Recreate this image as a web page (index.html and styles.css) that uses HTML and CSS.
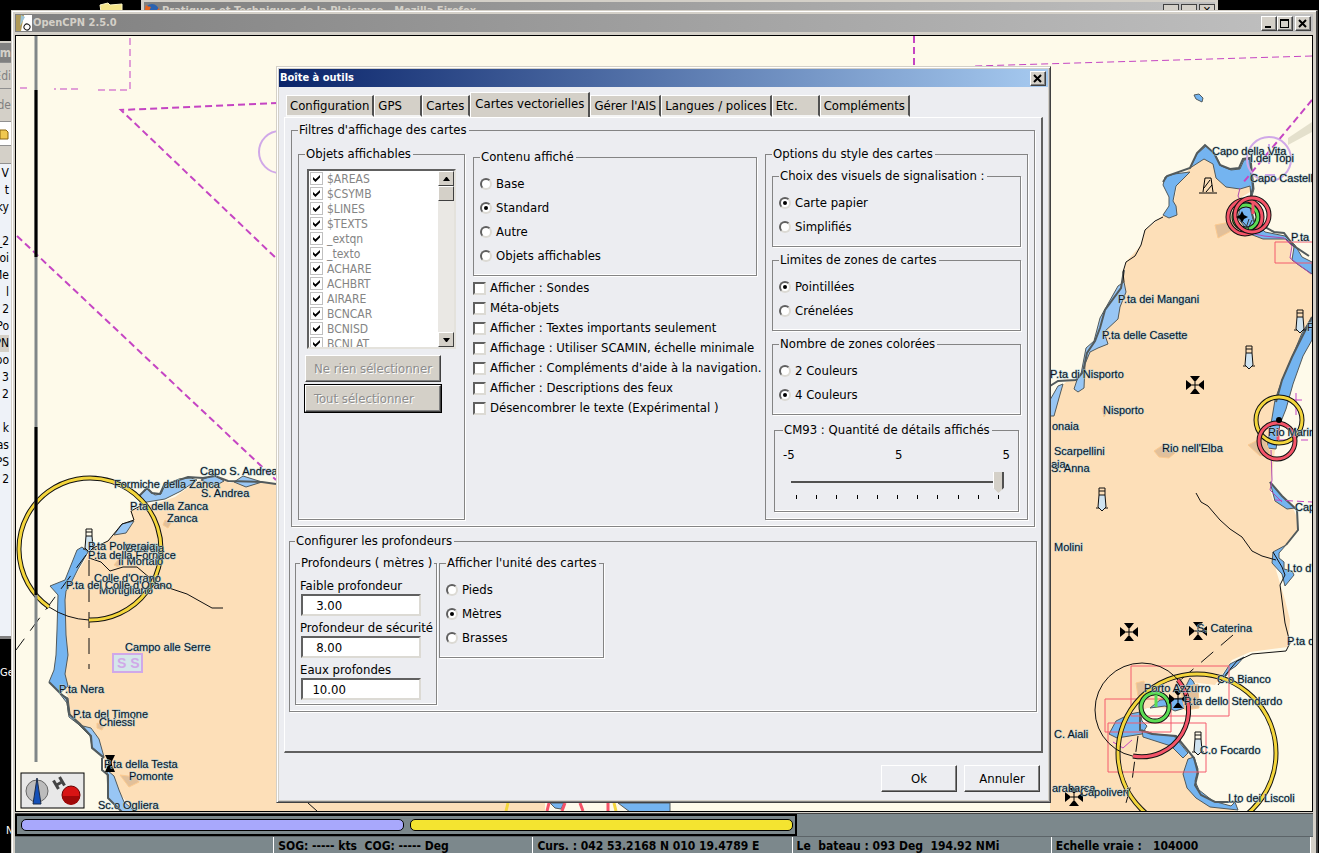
FILE: index.html
```html
<!DOCTYPE html>
<html lang="fr">
<head>
    <meta charset="UTF-8">
    <meta name="viewport" content="width=device-width, initial-scale=1.0">
    <title>OpenCPN 2.5.0</title>
    <link rel="stylesheet" href="styles.css">
</head>
<body>

<!-- Windows behind OpenCPN -->
<svg class="desktop-folder" width="24" height="12" viewBox="0 0 24 12"><path d="M1 5l8-2 2 2 12-1v8H2z" fill="#f5e58a" stroke="#fff8c8"/></svg>

<div class="firefox">
    <div class="firefox-title">
        <svg width="16" height="16" viewBox="0 0 16 16"><circle cx="8" cy="8" r="7" fill="#2a62b0"/><path d="M2 2c2 2 3 1 5 2l-2 4 4 3 6-6c2 6-2 10-7 10S-1 10 2 2z" fill="#e8641c"/></svg>
        <span>Pratiques et Techniques de la Plaisance - Mozilla Firefox</span>
        <i class="mini"></i><i class="mini"></i><i class="mini">✕</i>
    </div>
</div>

<div class="explorer">
    <div class="explorer-title">um</div>
    <div class="explorer-menu">Edi</div>
    <div class="explorer-tools">ide</div>
    <div class="explorer-address"><svg width="10" height="12" viewBox="0 0 10 12"><path d="M0 2h6l2 2v7H0z" fill="#f0c850" stroke="#8a6410"/></svg></div>
    <div class="explorer-head"></div>
    <ul class="explorer-list">
        <li>V</li><li>t</li><li>ky</li><li></li><li>_2</li><li>oi</li><li>Me</li><li>l</li><li>2</li><li>aPo</li><li class="current">PN</li><li>po</li><li>ar 3</li><li>ar 2</li><li></li><li>k</li><li>as</li><li>PS</li><li>2</li>
    </ul>
</div>
<div class="desktop-label first">Ge</div>
<div class="desktop-label second">N</div>

<!-- Main window -->
<main class="window">
    <header class="titlebar">
        <svg width="16" height="16" viewBox="0 0 16 16"><path d="M0 0h16v16H0z" fill="#fff"/><path d="M0 0h8L5 16H0z" fill="#b09a58"/><path d="M5 0l4 2-5 9z" fill="#9cc4d8"/><ellipse cx="11" cy="12" rx="3" ry="3" fill="none" stroke="#111" transform="rotate(30 11 12)"/></svg>
        <h1>OpenCPN 2.5.0</h1>
        <button class="caption" aria-label="Minimiser"><svg width="10" height="9"><path d="M1 7h6v2H1z"/></svg></button>
        <button class="caption" aria-label="Agrandir"><svg width="10" height="9"><path d="M0 0h9v9H0zM1 2v6h7V2z" fill-rule="evenodd"/></svg></button>
        <button class="caption close" aria-label="Fermer"><svg width="10" height="9"><path d="M1 1l7 7M8 1l-7 7" stroke="#000" stroke-width="2"/></svg></button>
    </header>

    <div class="chart">
        <svg viewBox="16 36 1296 775" preserveAspectRatio="xMinYMin slice">
            <defs>
                <g id="church">
                    <path d="M-9-5v10l5-4v-2zM9-5v10L4 1v-2zM-5-9H5L1-4h-2zM-5 9H5L1 4h-2z"/>
                    <path d="M-8 0H8M0-8V8" stroke="#000"/>
                </g>
                <g id="tower">
                    <path d="M-3-4h6l1 12-4 4-4-4z" fill="#cfe3f0" stroke="#111"/>
                    <path d="M-3-4v-7h6v7M-3-8h6M-6 9h3M3 9h3" fill="none" stroke="#111"/>
                </g>
            </defs>

            <!-- West coast -->
            <path class="land" d="M275 484L262 482 246 479 230 483 215 476 203 478 190 486 175 497 155 504 142 505 130 511 133 520 122 524 108 541 92 548 80 568 73 580 60 590 63 598 64 640 64 655 62 680 68 697 69 715 80 725 92 728 100 742 104 757 105 770 115 780 121 795 135 812H560V484z"/>
            <path class="shallow" d="M141 504l-1-9 7-6 8 6 6-1 4-9 14-6 12-1 6 2-16 11-16 8-24 4z"/>
            <path class="shallow" d="M201 480l13-5 10 6-9 5zM234 482l9-6 19 6-16 5zM114 535l8-11 12-3-8 12z"/>
            <path class="deep" d="M88 552l-6-5-5 3-6 15-6 15-15 6 8 9-1 35-1 25-2 15-5 12 11 11 8-7-3-12 3-19-2-20-1-35 1-9 5-8 7-14z"/>
            <path class="shallow" d="M60 694l8 4 2 16 6 8 3 3 12 3 8 11 5 18-12-10-2-11-12-12-9-7-2-14z"/>
            <path class="shallow" d="M107 770l1 28 14 14h14l-12-10-5-12-5-14z"/>
            <path class="coast" d="M276 484l-14-2-34-1-13-5-12 2-15-1-24 8-4 9-8-1-5-5-7 7 1 9M49 682l11 11 7 6 2 15 11 10 11 12 1 12 12 10M102 758l0 12 6 5v23l14 14"/>
            <path class="track" d="M142 505l-11 6 3 9-12 4-14 17-15 7M89 558l12 4 9 9 13-4 14 0 20 17 30 10 25 14h11M49 607q18 12 40 13"/>
            <path class="track dashed" d="M86 555L16 650M89 560v109"/>
            <path class="town" d="M165 520l6 3-3 5-5-3zM118 560l4 4-4 3-4-2zM97 723l7 3-2 4-5-2zM120 775l16 2 3 5-10 5z"/>

            <!-- East coast of the island -->
            <path class="land" d="M1050 398L1066 382 1077 380 1083 372 1087 355 1098 340 1106 318 1120 292 1124 270 1126 262 1141 245 1145 230 1160 218 1173 205 1178 182 1190 168 1192 162 1204 155 1213 160 1216 174 1226 183 1240 185 1250 182 1250 192 1240 198 1237 214 1250 230 1262 235 1285 235 1292 243 1290 256 1300 262 1312 274V323L1300 345 1288 380 1280 400 1275 450 1270 490 1273 500 1293 508 1298 520 1298 530 1286 546 1273 552 1276 570 1285 600 1290 620 1288 647 1250 652 1232 660 1221 676 1215 685 1190 682 1186 700 1180 710 1160 708 1147 708 1140 712 1140 730 1170 737 1183 752 1194 758 1198 770 1195 785 1200 795 1215 805 1240 812H1050z"/>
            <path class="deep" d="M1190 168l7-14 9-8 9 8 6 12 10 4 9-1 4-9 7-1 1 10 2 20-4 14 3 16 12 13 20 4 10 9 7 12 10 5v12l-12-8-8-6 2-13-8-8-23 0-13-5-12-16 3-16 10-6-1-10-10 3-14-2-10-9-3-14-9-5z"/>
            <path class="deep" d="M1190 172l-16 2-9 3-2 8 6 12 0 9-6 9 6 3 8-3-1-9-3-5 3-15zM1312 317l-10 16-10 24-10 23-7 20-8 48 9 1 4-25 6-15 7-25 10-28 9-16z"/>
            <path class="shallow" d="M1124 282l2 10-6 15-2 12-14 13 4 12-10 4-8 4-5 12-1 24-6 4-4-3 3-9 4-6 5-26 8-7 6-23 18-32zM1050 400l8-14 5-2-4 14-5 18h-4z"/>
            <path class="deep" d="M1270 482l10 12 15 14-8 1-12-8zM1286 545l-13 7-1 11 10 11 3 12 9-11-2-4-8-2 0-7-5-4 0-5zM1194 95l5-1 4 4-1 4-6-3z"/>
            <path class="deep" d="M1244 657l-14 7-9 14 5-2 4-6 6-4zM1190 678l-4 8 10 1-3-6zM1140 712l-10 2-14 7-7 13 8 4 25-4 5-8-5-5zM1150 708l10-8 22-2 3 10-10 3-10-5z"/>
            <path class="deep" d="M1142 730l12 4 20 2 14 17-5 5-12-12-28-9zM1194 757l4 12-3 12 4 9 14 11 18 5 4-4 3 8-28-3-14-9-9-10-4-14 5-15z"/>
            <path class="coast" d="M1050 386l8-5 18-1 7-8 4-19 8-12 5-13 5-18 16-22 3-18M1163 182l4-6 23-8 7-15 8-8 9 8 6 12 10 4 9-1 4-9 7-1 1 10 2 20-4 14 5 19 20 11 10 1 10 13 15 10M1312 317l-20 40-10 23-6 22M1270 482l12 14 15 14 1 20-12 15M1140 712v18l12 4 24 2 18 22 4 15-3 12 6 10 14 7 26 0"/>
            <path class="track" d="M1124 282l-1-10 3-10 9-6 6-11 4-15 10-9 8-4M1273 552l9 15 3 8-5 10 5 38 5 20-4 8-34 3-15 7-10 12-9 12"/>
            <path class="track" d="M1196 493l5 9 7 4 12 14 10 9 12 8 10 14 10 5 14 4"/>
            <path class="track dashed" d="M1233 635l-56 48M1138 736l-6 45-6 22"/>
            <path class="town" d="M1215 225l20-4-2 9-15 8zM1154 451l9-6 12 8-6 5-10-1zM1248 445l16-8 6 16-10 3zM1136 683l8-2 2 12-8 3zM1180 688l18-4 1 24-14 2zM1102 408l5 4-3 5z"/>
            <path d="M1288 138l24-16v10l-24 13z" fill="#e4e0cc"/>

            <!-- Zone limits -->
            <path class="limit thin" d="M130 38v52H96M78 89H54M27 88H17M1312 56L975 66M1279 440h33M1275 500l37 2"/>
            <path class="limit" d="M278 103L121 110 278 260M17 236L276 480M914 36v30M1312 100l-70 84"/>
            <path class="sector" d="M1275 242h38v21h-38zM1131 666h98v50h-98zM1105 699h66v33h-66zM1108 723h98v49h-98z"/>
            <path d="M1240 188l-2 8 4 8M1250 233l14 3 20 2 8 8-2 12 8 6 13 10M1271 450l1 30-2 10 12 12" fill="none" stroke="#b04ab0"/>
            <path d="M1296 393v22M1290 400h12M1120 728v14M1113 742l10 6 9-8" fill="none" stroke="#c545c3"/>
            <circle class="area" cx="280" cy="152" r="21"/>
            <circle class="area" cx="1269" cy="159" r="22"/>
            <path class="area" d="M1269 144v20M1265 175h10"/>

            <!-- Light sectors -->
            <g class="light">
                <path class="edge" d="M49 607A71 71 0 1 1 89 620"/><path class="yellow" d="M49 607A71 71 0 1 1 89 620"/>
                <circle class="edge" cx="1197" cy="753" r="79"/><circle class="yellow" cx="1197" cy="753" r="79"/>
                <circle class="edge" cx="1279" cy="420" r="23"/><circle class="yellow" cx="1279" cy="420" r="23"/>
                <circle class="edge" cx="1277" cy="441" r="18"/><circle class="red" cx="1277" cy="441" r="18"/>
                <circle class="edge" cx="1246" cy="217" r="12"/><circle class="green" cx="1246" cy="217" r="12"/>
                <circle class="edge" cx="1245" cy="217" r="17"/><circle class="red" cx="1245" cy="217" r="17"/>
                <circle class="edge" cx="1252" cy="215" r="17"/><circle class="red" cx="1252" cy="215" r="17"/>
                <circle class="hair" cx="1142" cy="710" r="47"/>
                <path class="edge" d="M1178 680A47 47 0 0 1 1133 756"/><path class="red" d="M1178 680A47 47 0 0 1 1133 756"/>
                <circle class="edge" cx="1155" cy="707" r="14"/><circle class="green" cx="1155" cy="707" r="14"/>
                <path class="red" d="M1253 202v12M1278 428v12"/><path class="green" d="M1156 695v12"/>
            </g>
            <path d="M1236 217l4-2 2-4 2 4 4 2-4 2-2 4-2-4z"/>
            <path d="M1243 222l6 7M1249 219l-3 9M1252 220l-4 9" stroke="#333"/>
            <circle cx="1279" cy="420" r="3"/>
            <use href="#church" x="1195" y="385"/>
            <use href="#church" x="1129" y="632"/>
            <use href="#church" x="1198" y="631"/>
            <use href="#church" x="1178" y="699"/>
            <use href="#church" x="1074" y="797"/>
            <use href="#tower" x="1249" y="357"/>
            <use href="#tower" x="1300" y="321"/>
            <use href="#tower" x="1102" y="499"/>
            <use href="#tower" x="89" y="540"/>
            <use href="#tower" x="1198" y="743"/>
            <path d="M1203 192l2-14h6l2 14M1199 193h18M1204 188l6-8M1206 192l6-7" fill="none" stroke="#000"/>
            <path d="M105 755h10l-3 6v4l3 7h-10l3-7v-4z"/>
            <g><rect x="113" y="654" width="29" height="18" fill="#d4e6ea" stroke="#d0a8e8" stroke-width="2"/><text class="anchorage" x="117" y="668">S S</text></g>

            <!-- Details showing under the dialog -->
            <path d="M545 803h95v9h-95z" fill="#fefaea"/>
            <path class="deep" d="M550 803h14l-3 6-6-1zM618 803h52v9h-40z"/>
            <path d="M308 803l9 8" stroke="#111"/>
            <path d="M508 803l-2 8M614 803l2 8" class="yellow" fill="none"/>
            <path d="M549 803l-2 8M565 803l-3 8M580 803l3 8M608 803v8" class="red" fill="none"/>

            <g class="labels">
                <text x="200" y="475">Capo S. Andrea</text>
                <text x="114" y="488">Formiche della Zanca</text>
                <text x="201" y="497">S. Andrea</text>
                <text x="130" y="510">P.ta della Zanca</text>
                <text x="167" y="522">Zanca</text>
                <text x="125" y="552">Guardia</text>
                <text x="88" y="550">P.ta Polveraia</text>
                <text x="118" y="565">Il Mortaio</text>
                <text x="88" y="559">P.ta della Fornace</text>
                <text x="94" y="582">Colle d'Orano</text>
                <text x="99" y="594">Mortigliano</text>
                <text x="66" y="589">P.ta del Colle d'Orano</text>
                <text x="125" y="651">Campo alle Serre</text>
                <text x="59" y="693">P.ta Nera</text>
                <text x="73" y="718">P.ta del Timone</text>
                <text x="99" y="726">Chiessi</text>
                <text x="104" y="768">P.ta della Testa</text>
                <text x="129" y="780">Pomonte</text>
                <text x="98" y="809">Sc.o Ogliera</text>
                <text x="1212" y="155">Capo della Vita</text>
                <text x="1250" y="162">I.dei Topi</text>
                <text x="1250" y="182">Capo Castello</text>
                <text x="1291" y="241">P.ta</text>
                <text x="1118" y="303">P.ta dei Mangani</text>
                <text x="1102" y="339">P.ta delle Casette</text>
                <text x="1050" y="378">P.ta di Nisporto</text>
                <text x="1307" y="331">P.ta</text>
                <text x="1103" y="414">Nisporto</text>
                <text x="1052" y="430">onaia</text>
                <text x="1268" y="436">Rio Marina</text>
                <text x="1162" y="452">Rio nell'Elba</text>
                <text x="1054" y="455">Scarpellini</text>
                <text x="1051" y="468">aia</text>
                <text x="1051" y="472">S. Anna</text>
                <text x="1295" y="511">Capo</text>
                <text x="1054" y="551">Molini</text>
                <text x="1287" y="572">I.to d'O</text>
                <text x="1197" y="632">S. Caterina</text>
                <text x="1287" y="645">P.ta d</text>
                <text x="1217" y="683">C.o Bianco</text>
                <text x="1144" y="692">Porto Azzurro</text>
                <text x="1184" y="705">P.ta dello Stendardo</text>
                <text x="1054" y="738">C. Aiali</text>
                <text x="1200" y="754">C.o Focardo</text>
                <text x="1052" y="792">arabarca</text>
                <text x="1080" y="796">Capoliveri</text>
                <text x="1228" y="802">I.to dei Liscoli</text>
            </g>

            <!-- Scale bar and compass -->
            <path d="M36 36V762" stroke="#808688" stroke-width="3"/>
            <path d="M36 90V257M36 427V595" stroke="#000" stroke-width="3"/>
            <rect x="21" y="773" width="63" height="35" fill="#e8e8e8" stroke="#000"/>
            <circle cx="37" cy="791" r="11" fill="#bcbcbc" stroke="#666"/>
            <path d="M37 778l4 26h-8z" fill="#1450b8" stroke="#1c2c48"/>
            <circle cx="71" cy="795" r="9" fill="#d81414" stroke="#600"/>
            <path d="M62 796a9 9 0 0 0 18 0z" fill="#a00808"/>
            <g transform="rotate(-30 59 783)" fill="#444"><path d="M54 778h3v10h-3zM61 778h3v10h-3zM57 782h4v3h-4z"/></g>
        </svg>
    </div>

    <div class="chart-bar">
        <div class="chart-keys"><span class="key raster"></span><span class="key vector"></span></div>
    </div>

    <footer class="status">
        <span></span>
        <span>SOG: ----- kts&nbsp; COG: ----- Deg</span>
        <span>Curs. : 042 53.2168 N 010 19.4789 E</span>
        <span>Le&nbsp; bateau : 093 Deg&nbsp; 194.92 NMi</span>
        <span>Echelle vraie :&nbsp;&nbsp; 104000</span>
    </footer>
</main>

<!-- Toolbox dialog -->
<section class="dialog" role="dialog" aria-labelledby="dialog-title">
    <header class="dialog-title">
        <h2 id="dialog-title">Boîte à outils</h2>
        <button class="caption" aria-label="Fermer"><svg width="10" height="9"><path d="M1 1l7 7M8 1l-7 7" stroke="#000" stroke-width="2"/></svg></button>
    </header>

    <nav class="tabs" role="tablist">
        <button role="tab">Configuration</button>
        <button role="tab">GPS</button>
        <button role="tab">Cartes</button>
        <button role="tab" class="selected" aria-selected="true">Cartes vectorielles</button>
        <button role="tab">Gérer l'AIS</button>
        <button role="tab">Langues / polices</button>
        <button role="tab">Etc.</button>
        <button role="tab">Compléments</button>
    </nav>

    <form class="page">
        <fieldset class="group filters">
            <legend>Filtres d'affichage des cartes</legend>
            <div class="filter-columns">
                <fieldset class="group objects">
                    <legend>Objets affichables</legend>
                    <div class="listbox">
                        <div class="list-items">
                            <label><input type="checkbox" checked>$AREAS</label>
                            <label><input type="checkbox" checked>$CSYMB</label>
                            <label><input type="checkbox" checked>$LINES</label>
                            <label><input type="checkbox" checked>$TEXTS</label>
                            <label><input type="checkbox" checked>_extqn</label>
                            <label><input type="checkbox" checked>_texto</label>
                            <label><input type="checkbox" checked>ACHARE</label>
                            <label><input type="checkbox" checked>ACHBRT</label>
                            <label><input type="checkbox" checked>AIRARE</label>
                            <label><input type="checkbox" checked>BCNCAR</label>
                            <label><input type="checkbox" checked>BCNISD</label>
                            <label><input type="checkbox" checked>BCNLAT</label>
                        </div>
                        <div class="scrollbar">
                            <button type="button" aria-label="Monter"><svg width="7" height="4"><path d="M0 4l3-4h1l3 4z"/></svg></button>
                            <span class="thumb"></span>
                            <button type="button" class="down" aria-label="Descendre"><svg width="7" height="4"><path d="M0 0h7L4 4H3z"/></svg></button>
                        </div>
                    </div>
                    <button type="button" class="wide" disabled>Ne rien sélectionner</button>
                    <button type="button" class="wide default" disabled>Tout sélectionner</button>
                </fieldset>

                <div class="content">
                    <fieldset class="group radios">
                        <legend>Contenu affiché</legend>
                        <label><input type="radio" name="contenu">Base</label>
                        <label><input type="radio" name="contenu" checked>Standard</label>
                        <label><input type="radio" name="contenu">Autre</label>
                        <label><input type="radio" name="contenu">Objets affichables</label>
                    </fieldset>
                    <div class="checks">
                        <label><input type="checkbox">Afficher : Sondes</label>
                        <label><input type="checkbox">Méta-objets</label>
                        <label><input type="checkbox">Afficher : Textes importants seulement</label>
                        <label><input type="checkbox">Affichage : Utiliser SCAMIN, échelle minimale</label>
                        <label><input type="checkbox">Afficher : Compléments d'aide à la navigation.</label>
                        <label><input type="checkbox">Afficher : Descriptions des feux</label>
                        <label><input type="checkbox">Désencombrer le texte (Expérimental )</label>
                    </div>
                </div>

                <fieldset class="group style-options">
                    <legend>Options du style des cartes</legend>
                    <fieldset class="group radios">
                        <legend>Choix des visuels de signalisation :</legend>
                        <label><input type="radio" name="visuels" checked>Carte papier</label>
                        <label><input type="radio" name="visuels">Simplifiés</label>
                    </fieldset>
                    <fieldset class="group radios">
                        <legend>Limites de zones de cartes</legend>
                        <label><input type="radio" name="limites" checked>Pointillées</label>
                        <label><input type="radio" name="limites">Crénelées</label>
                    </fieldset>
                    <fieldset class="group radios">
                        <legend>Nombre de zones colorées</legend>
                        <label><input type="radio" name="couleurs">2 Couleurs</label>
                        <label><input type="radio" name="couleurs" checked>4 Couleurs</label>
                    </fieldset>
                    <fieldset class="group detail">
                        <legend>CM93 : Quantité de détails affichés</legend>
                        <div class="detail-values"><span>-5</span><span>5</span><span>5</span></div>
                        <input type="range" min="-5" max="5" value="5" aria-label="Quantité de détails affichés">
                        <div class="ticks"><i></i><i></i><i></i><i></i><i></i><i></i><i></i><i></i><i></i><i></i><i></i></div>
                    </fieldset>
                </fieldset>
            </div>
        </fieldset>

        <fieldset class="group depths">
            <legend>Configurer les profondeurs</legend>
            <div class="depth-columns">
                <fieldset class="group depth-values">
                    <legend>Profondeurs ( mètres )</legend>
                    <label for="faible">Faible profondeur</label>
                    <input type="text" id="faible" value="   3.00">
                    <label for="securite">Profondeur de sécurité</label>
                    <input type="text" id="securite" value="   8.00">
                    <label for="profondes">Eaux profondes</label>
                    <input type="text" id="profondes" value="  10.00">
                </fieldset>
                <fieldset class="group radios units">
                    <legend>Afficher l'unité des cartes</legend>
                    <label><input type="radio" name="unite">Pieds</label>
                    <label><input type="radio" name="unite" checked>Mètres</label>
                    <label><input type="radio" name="unite">Brasses</label>
                </fieldset>
            </div>
        </fieldset>
    </form>

    <div class="dialog-buttons">
        <button type="button">Ok</button>
        <button type="button">Annuler</button>
    </div>
</section>

</body>
</html>
```
FILE: styles.css
```css
* {
    box-sizing: border-box;
}

body {
    position: relative;
    margin: 0;
    height: 100vh;
    overflow: hidden;
    background: #000;
    color: #000;
    font-family: "DejaVu Sans Condensed", "DejaVu Sans", sans-serif;
    font-size: 13px;
    line-height: 16px;
}

button, input {
    font: inherit;
    color: inherit;
}

h1, h2 {
    margin: 0;
    flex: 1;
    font-size: 11px;
    font-weight: bold;
}

svg {
    display: block;
}

/* Background windows */
.desktop-folder {
    position: absolute;
    left: 99px;
    top: 0;
}

.firefox {
    position: absolute;
    left: 141px;
    right: 101px;
    top: 0;
    height: 40px;
    background: #d4d0c8;
    padding: 2px 3px;
}

.firefox-title {
    display: flex;
    align-items: center;
    gap: 2px;
    height: 18px;
    background: linear-gradient(90deg, #808080, #c0c0c0);
    color: #d4d0c8;
    font-size: 11px;
    font-weight: bold;
}

.firefox-title span {
    flex: 1;
}

.mini {
    width: 16px;
    height: 14px;
    background: #d4d0c8;
    border: 1px solid #404040;
    color: #000;
    line-height: 12px;
    text-align: center;
}

.explorer {
    position: absolute;
    left: 0;
    top: 41px;
    width: 11px;
    height: 598px;
    overflow: hidden;
    background: #eef2f8;
    border-top: 2px solid #d4d0c8;
    border-bottom: 3px solid #808080;
    font-size: 12px;
}

.explorer div {
    display: flex;
    align-items: center;
    justify-content: flex-end;
    background: #d4d0c8;
    color: #808080;
    border-bottom: 1px solid #909090;
}

.explorer .explorer-title {
    height: 20px;
    background: #808080;
    color: #d4d0c8;
    font-weight: bold;
}

.explorer .explorer-menu {
    height: 26px;
}

.explorer .explorer-tools {
    height: 33px;
}

.explorer .explorer-address {
    height: 24px;
    background: #fff;
    justify-content: flex-start;
}

.explorer .explorer-head {
    height: 18px;
}

.explorer-list {
    display: flex;
    flex-direction: column;
    margin: 0;
    padding: 1px 2px 0 0;
    list-style: none;
    line-height: 17px;
}

.explorer-list li {
    display: flex;
    justify-content: flex-end;
    height: 17px;
    white-space: nowrap;
}

.explorer-list .current {
    background: #d4d0c8;
}

.desktop-label {
    position: absolute;
    left: 0;
    width: 11px;
    overflow: hidden;
    color: #fff;
    font-size: 11px;
}

.desktop-label.first {
    top: 665px;
}

.desktop-label.second {
    top: 823px;
    padding-left: 6px;
}

/* Main window */
.window {
    position: absolute;
    left: 11px;
    right: 1px;
    top: 10px;
    bottom: 0;
    display: flex;
    flex-direction: column;
    background: #d4d0c8;
    border: 1px solid #d4d0c8;
    border-right: 2px solid #404040;
    border-bottom: 0;
    box-shadow: inset 1px 1px #fff;
    padding: 3px 3px 0;
}

.titlebar {
    display: flex;
    align-items: center;
    height: 18px;
    padding: 0 2px 0 1px;
    background: linear-gradient(90deg, #808080, #c0c0c0);
    color: #d4d0c8;
}

.titlebar h1 {
    padding-left: 1px;
}

.caption {
    display: flex;
    align-items: center;
    justify-content: center;
    width: 16px;
    height: 15px;
    padding: 0;
    background: #d4d0c8;
    border: 1px solid;
    border-color: #fff #404040 #404040 #fff;
    box-shadow: inset -1px -1px #808080;
}

.caption.close {
    margin-left: 2px;
}

.chart {
    flex: 1;
    min-height: 0;
    margin-top: 3px;
    border: 1px solid #000;
    background: #fefaea;
    overflow: hidden;
}

.chart svg {
    width: 100%;
    height: 100%;
}

.land {
    fill: #fddfb8;
}

.deep {
    fill: #74b4f0;
    stroke: #525a5c;
}

.shallow {
    fill: #98c6f4;
    stroke: #525a5c;
}

.coast {
    fill: none;
    stroke: #525a5c;
    stroke-width: 2;
}

.track {
    fill: none;
    stroke: #111;
}

.track.dashed {
    stroke-dasharray: 16 10;
}

.town {
    fill: #e2c09a;
    stroke: #fcca90;
}

.limit {
    fill: none;
    stroke: #c545c3;
    stroke-width: 2;
    stroke-dasharray: 7 4;
}

.limit.thin {
    stroke-width: 1;
}

.sector {
    fill: none;
    stroke: #f45a6c;
}

.area {
    fill: none;
    stroke: #d0a8e8;
    stroke-width: 2;
}

.light * {
    fill: none;
}

.edge {
    stroke: #111;
    stroke-width: 5;
}

.hair {
    stroke: #111;
}

.yellow {
    stroke: #f4d63c;
    stroke-width: 3;
}

.red {
    stroke: #f45468;
    stroke-width: 3;
}

.green {
    stroke: #5cdc54;
    stroke-width: 3;
}

.labels text {
    font-family: "Liberation Sans", Arial, sans-serif;
    font-size: 11px;
    fill: #101418;
    stroke: #a8c8d4;
    stroke-width: 1px;
    paint-order: stroke;
}

.anchorage {
    font-family: "Liberation Sans", Arial, sans-serif;
    font-size: 14px;
    font-weight: bold;
    fill: #d0a8e8;
}

.chart-bar {
    height: 24px;
    margin-top: 1px;
    background: #7c888c;
    border-top: 1px solid #444;
    border-bottom: 1px solid #5c6468;
}

.chart-keys {
    display: flex;
    gap: 6px;
    width: calc(60% + 3px);
    height: 22px;
    padding: 3px 2px 3px 4px;
    border: 2px solid #000;
}

.key {
    flex: 1;
    border: 1px solid #000;
    border-radius: 5px;
}

.raster {
    background: #a8a8fc;
}

.vector {
    background: #f4e430;
}

.status {
    display: flex;
    height: 16px;
    margin-right: 2px;
    background: #7c888c;
    font-size: 12px;
    line-height: 18px;
    font-weight: bold;
    white-space: pre;
}

.status span {
    flex: 1;
    min-width: 0;
    padding-left: 4px;
    border-right: 1px solid #fff;
}

/* Dialog */
.dialog {
    position: absolute;
    left: 276px;
    right: 268px;
    top: 66px;
    background: #ecedf1;
    border: 1px solid;
    border-color: #d4d0c8 #404040 #404040 #d4d0c8;
    box-shadow: inset 1px 1px #fff, inset -1px -1px #808080, inset 0 0 0 2px #d4d0c8;
    padding: 2px 2px 10px;
}

.dialog-title {
    display: flex;
    align-items: center;
    height: 18px;
    padding: 0 2px 0 1px;
    background: linear-gradient(90deg, #0a246a, #a6caf0);
    color: #fff;
}

.tabs {
    display: flex;
    align-items: flex-end;
    height: 30px;
    margin-left: 6px;
    padding-left: 1px;
}

.tabs button {
    min-width: 48px;
    height: 22px;
    padding: 0 3px;
    background: #d4d0c8;
    border: 1px solid #fff;
    border-right: 2px solid #505050;
    border-bottom: 2px solid #f4f4f4;
    text-align: left;
    white-space: nowrap;
}

.tabs .selected {
    height: 25px;
    padding: 0 4px 2px;
    border-bottom: 0;
}

.page {
    margin: 0 5px;
    padding: 4px 4px 39px;
    border: 1px solid #fff;
    border-right: 2px solid #606060;
    border-bottom: 2px solid #606060;
}

.group {
    min-width: 0;
    margin: 0;
    padding: 7px 6px;
    border: 1px solid #848484;
    box-shadow: inset 0 -1px #fff, 1px 1px #fff;
}

.group legend {
    margin: 0;
    padding: 0 2px 0 1px;
    background: #ecedf1;
    white-space: nowrap;
}

.group label {
    display: flex;
    align-items: center;
    white-space: nowrap;
}

.filters {
    margin: 0 2px 6px;
    padding: 8px 6px 6px;
}

.filter-columns {
    display: grid;
    grid-template-columns: 167px 1fr 263px;
    gap: 8px;
}

.content {
    min-width: 0;
    padding-top: 3px;
}

.radios label {
    height: 24px;
    gap: 4px;
}

.checks {
    padding-top: 2px;
}

.checks label {
    height: 20px;
    gap: 4px;
}

input[type="radio"], input[type="checkbox"] {
    appearance: none;
    flex: none;
    display: grid;
    place-items: center;
    margin: 0;
    width: 13px;
    height: 13px;
    background: #fff;
    border: 2px solid;
    border-color: #606060 #dcdad4 #dcdad4 #606060;
}

input[type="radio"] {
    width: 12px;
    height: 12px;
    border-radius: 50%;
}

input[type="radio"]:checked::before {
    content: "";
    width: 4px;
    height: 4px;
    border-radius: 50%;
    background: #000;
}

input[type="checkbox"]:checked::before {
    content: "";
    width: 7px;
    height: 7px;
    background: #000;
    clip-path: polygon(0 30%, 35% 60%, 100% 0, 100% 35%, 35% 100%, 0 65%);
}

/* Object list */
.listbox {
    display: flex;
    height: 180px;
    margin: 0 2px 6px;
    background: #fff;
    border: 2px solid;
    border-color: #606060 #e4e2dc #e4e2dc #606060;
}

.list-items {
    flex: 1;
    overflow: hidden;
    padding-left: 1px;
    color: #848484;
    font-size: 12px;
}

.list-items label {
    height: 15px;
    gap: 4px;
}

.list-items input[type="checkbox"] {
    border: 1px solid #c0c0c0;
}

.scrollbar {
    display: flex;
    flex-direction: column;
    width: 16px;
    background: #eae8e4;
}

.scrollbar button, .thumb {
    display: flex;
    align-items: center;
    justify-content: center;
    height: 15px;
    padding: 0;
    background: #d4d0c8;
    border: 1px solid;
    border-color: #fff #404040 #404040 #fff;
}

.scrollbar .down {
    margin-top: auto;
}

.wide, .dialog-buttons button {
    display: block;
    height: 27px;
    background: #d4d0c8;
    border: 1px solid;
    border-color: #fff #404040 #404040 #fff;
    box-shadow: inset -1px -1px #808080;
}

.dialog-buttons button {
    background: #ecedf1;
}

.wide {
    width: 136px;
    margin-bottom: 3px;
    padding: 0 8px;
    color: #8c8c8c;
    text-align: left;
    text-shadow: 1px 1px #fff;
    white-space: nowrap;
}

.wide.default {
    outline: 1px solid #000;
}

/* Style options */
.style-options {
    display: flex;
    flex-direction: column;
    gap: 5px;
    padding: 6px 6px 7px;
}

.detail {
    margin: 2px 2px 0;
    padding: 9px 8px 12px;
}

.detail-values {
    display: flex;
    justify-content: space-between;
}

.detail input {
    display: block;
    appearance: none;
    width: calc(100% - 14px);
    height: 22px;
    margin: 9px 6px 1px 8px;
    background: none;
}

.detail input::-webkit-slider-runnable-track {
    height: 22px;
    background: linear-gradient(#505050, #505050) 0 9px / 100% 2px no-repeat;
}

.detail input::-webkit-slider-thumb {
    appearance: none;
    width: 11px;
    height: 21px;
    background: linear-gradient(90deg, #fff 1px, #d4d0c8 1px 9px, #505050 9px);
    clip-path: polygon(0 0, 100% 0, 100% 75%, 50% 100%, 0 75%);
}

.ticks {
    display: flex;
    justify-content: space-between;
    padding: 0 11px 0 13px;
}

.ticks i {
    width: 1px;
    height: 4px;
    background: #000;
}

/* Depths */
.depths {
    padding: 6px 5px;
}

.depth-columns {
    display: flex;
    align-items: flex-start;
    gap: 2px;
}

.depth-values {
    width: 142px;
    padding: 7px 4px 0;
}

.depth-values input {
    display: block;
    width: 120px;
    height: 22px;
    margin: 0 1px 4px;
    padding: 0 2px;
    background: #fff;
    border: 2px solid;
    border-color: #606060 #dcdad4 #dcdad4 #606060;
}

.units {
    width: 165px;
}

.dialog-buttons {
    display: flex;
    justify-content: flex-end;
    gap: 7px;
    padding: 12px 8px 0 0;
}

.dialog-buttons button {
    width: 76px;
}
```
